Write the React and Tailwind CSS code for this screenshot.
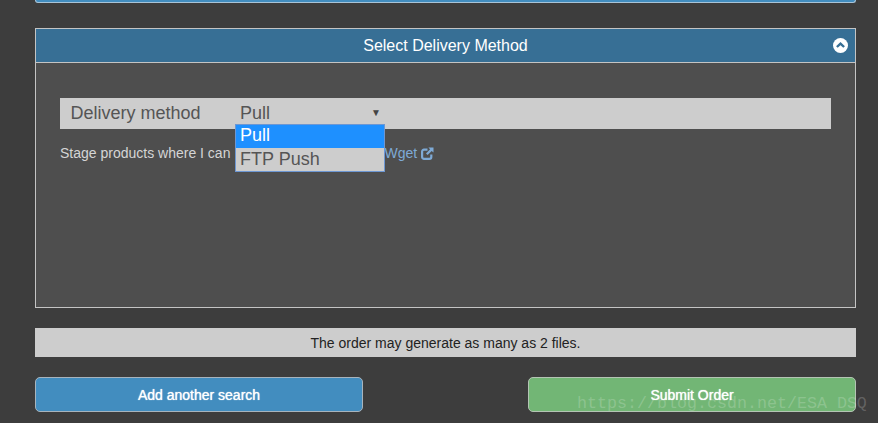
import React from "react";

function ExternalLink() {
  return (
    <svg viewBox="0 0 13 13" className="inline-block w-[13px] h-[13px] ml-[4px] align-[-2px]" fill="none">
      <path d="M6.5 2.6H3A1.9 1.9 0 0 0 1.1 4.5v5.4A1.9 1.9 0 0 0 3 11.8h5.4a1.9 1.9 0 0 0 1.9-1.9V7.6" stroke="#7eaad6" strokeWidth="2.2" />
      <path d="M7.4 0.5h5.1V5.6L10.7 3.9 6.6 8 5 6.4 9.1 2.3z" fill="#7eaad6" />
    </svg>
  );
}

function ChevronCircle() {
  return (
    <svg viewBox="0 0 15 15" className="w-[15px] h-[15px]">
      <circle cx="7.5" cy="7.5" r="7.5" fill="#ffffff" />
      <path d="M3.9 9 7.5 5.6 11.1 9" fill="none" stroke="#376f95" strokeWidth="2.4" />
    </svg>
  );
}

export default function App() {
  return (
    <div className="relative h-[423px] w-[878px] overflow-hidden bg-[#3d3d3d] font-['Liberation_Sans',Arial,sans-serif]">
      <div className="mx-[35px] w-[821px]">
        <div className="h-[3px] rounded-b-[4px] border-b border-x border-[#a9c4d8] bg-[#428dbf]" />

        <section className="mt-[25px] h-[280px] border border-[#c4c4c4] bg-[#4e4e4e]">
          <header className="flex h-[34px] items-center justify-center border-b border-[#c4c4c4] bg-[#376f95] relative">
            <h2 className="text-base leading-none text-white">Select Delivery Method</h2>
            <span className="absolute right-[7px] top-[9px] flex">
              <ChevronCircle />
            </span>
          </header>

          <div className="px-6 pt-[35px]">
            <div className="relative flex h-[31px] items-center bg-[#cdcdcd] pb-[2px] text-lg text-[#555555]">
              <span className="ml-[10.5px] w-[169.5px]">Delivery method</span>
              <span className="w-[131px]">Pull</span>
              <span className="text-[10px] leading-none text-[#444444]">▼</span>

              <ul className="absolute left-[175px] top-[26px] w-[150px] border border-[#6d97d3] bg-[#cdcdcd] text-lg">
                <li className="bg-[#1e90ff] pb-[2px] pl-[4px] leading-[21px] text-white">Pull</li>
                <li className="pb-[1px] pl-[4px] leading-[22px] text-[#555555]">FTP Push</li>
              </ul>
            </div>

            <p className="mt-[15px] text-sm leading-[18px] text-[#d5d5d5]">
              Stage products where I can
              <span className="inline-block w-[154px]" />
              <a className="text-[#7eaad6]">
                Wget
                <ExternalLink />
              </a>
            </p>
          </div>
        </section>

        <div className="mt-5 flex h-[29px] items-center justify-center bg-[#cdcdcd] text-sm text-[#222222]">
          The order may generate as many as 2 files.
        </div>

        <div className="mt-5 flex justify-between">
          <button className="h-[35px] w-[328px] rounded-[5px] border border-[#a8b4bd] bg-[#428dbf] text-sm text-white [text-shadow:0_0_1px_#ffffff]">
            Add another search
          </button>
          <button className="h-[35px] w-[328px] rounded-[5px] border border-[#b4c4b4] bg-[#72b675] text-sm text-white [text-shadow:0_0_1px_#ffffff]">
            Submit Order
          </button>
        </div>
      </div>

      <span className="absolute left-[577px] top-[394px] whitespace-nowrap font-['Liberation_Mono',monospace] text-[16.67px] leading-[20px] text-[#ffffff]/20">
        https://blog.csdn.net/ESA DSQ
      </span>
    </div>
  );
}
